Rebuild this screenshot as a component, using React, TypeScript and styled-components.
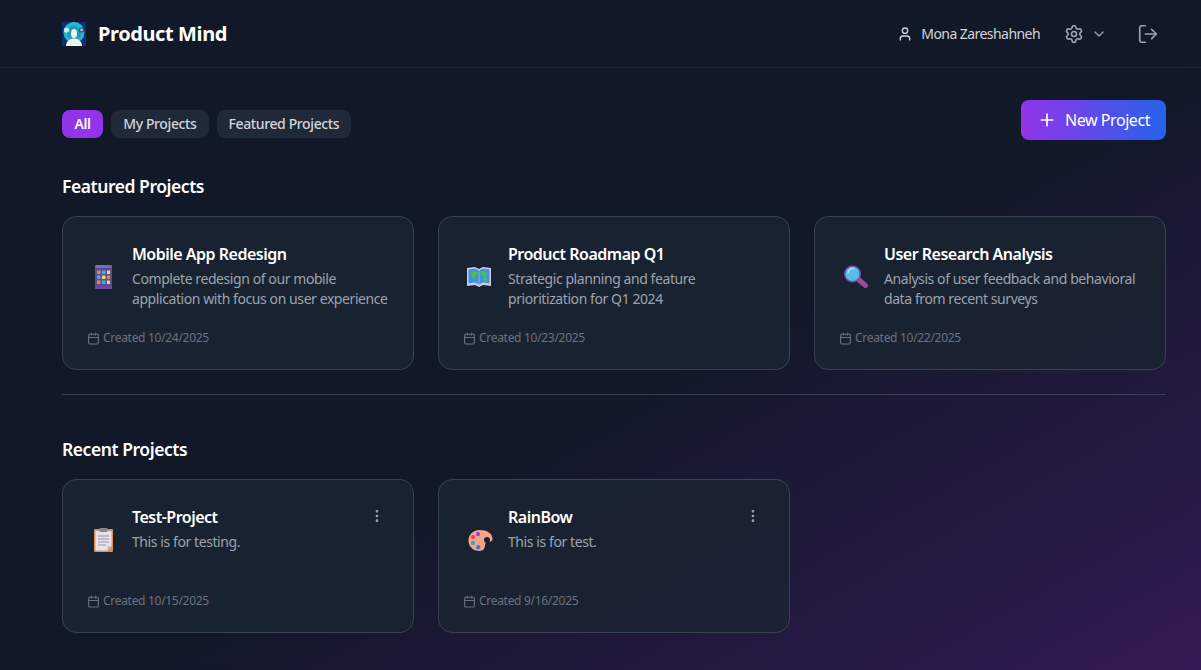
import { ReactNode } from 'react';
import styled, { createGlobalStyle } from 'styled-components';
import { Calendar, ChevronDown, EllipsisVertical, LogOut, Plus, Settings, User } from 'lucide-react';

const GlobalStyle = createGlobalStyle`
  html, body { margin: 0; padding: 0; height: 100%; }
  body { background: #111827; font-family: "Noto Sans", "Liberation Sans", sans-serif; }
`;

const Logo = () => (
  <svg width="24" height="24" viewBox="0 0 24 24">
    <rect width="24" height="24" fill="#0b2f78" />
    <circle cx="12" cy="10.5" r="10.5" fill="#27b6c9" />
    <circle cx="12" cy="11" r="7" fill="#1f9cb4" />
    <circle cx="4.5" cy="8" r="2.600" fill="#cfe8ee" />
    <circle cx="19.5" cy="8" r="2.600" fill="#2d5b94" />
    <circle cx="19.5" cy="8" r="1.300" fill="#a8c4dc" />
    <ellipse cx="12" cy="11.5" rx="3" ry="4.500" fill="#eef7ee" />
    <path d="M4 24c0-5 4-7.5 8-7.5s8 2.500 8 7.500z" fill="#eef7ee" />
  </svg>
);

const PhoneEmoji = () => (
  <svg width="24" height="24" viewBox="0 0 24 24">
    <rect x="4" y="0" width="17" height="24" rx="1.500" fill="#5c4a94" />
    <rect x="4" y="0" width="17" height="3" rx="1.500" fill="#7a68b8" />
    <rect x="4" y="21" width="17" height="3" rx="1" fill="#6a4a9c" />
    <rect x="6" y="5.500" width="3.500" height="3.500" fill="#f5803c" />
    <rect x="11" y="5.500" width="3.500" height="3.500" fill="#2bb0f0" />
    <rect x="16" y="5.500" width="3" height="3.500" fill="#fbd84a" />
    <rect x="6" y="10.500" width="3.500" height="3.500" fill="#2bb0f0" />
    <rect x="11" y="10.500" width="3.500" height="3.500" fill="#fbd84a" />
    <rect x="16" y="10.500" width="3" height="3.500" fill="#f5803c" />
    <rect x="6" y="15.500" width="3.500" height="3.500" fill="#f5803c" />
    <rect x="11" y="15.500" width="3.500" height="3.500" fill="#2bb0f0" />
    <rect x="16" y="15.500" width="3" height="3.500" fill="#fbd84a" />
  </svg>
);

const MapEmoji = () => (
  <svg width="26" height="24" viewBox="1 0 26 24">
    <path d="M1 3l8-1 4 2 4-2 8 1v18l-8-1-4 2-4-2-8 1z" fill="#d8c8e8" />
    <path d="M2.500 4.500l6.500-1 4 2 4-2 6.500 1v14l-6.500-1-4 2-4-2-6.500 1z" fill="#3a96e0" />
    <path d="M5 7l5-1 2 3-3 2-1 4-2-3zM14 7l6-1 1 4-3 1-2-1zM17 13l3-1 1 4-3 1z" fill="#4cc04c" />
    <path d="M13 5v17" stroke="#b4a8cc" strokeWidth="0.800" />
  </svg>
);

const SearchEmoji = () => (
  <svg width="26" height="26" viewBox="0 0 26 26">
    <path d="M15.500 15.500l7 6" stroke="#9c4a94" strokeWidth="5" strokeLinecap="round" />
    <circle cx="9.500" cy="10" r="8.500" fill="#7a4fa8" />
    <circle cx="9.500" cy="10" r="7" fill="#52c0ea" />
    <path d="M5 9a5 5 0 0 1 6-4.500" stroke="#9fe2f6" strokeWidth="1.600" fill="none" strokeLinecap="round" />
  </svg>
);

const ClipboardEmoji = () => (
  <svg width="24" height="26" viewBox="0 0 24 26">
    <rect x="3" y="2" width="19" height="23" rx="1" fill="#d8925a" />
    <path d="M4.500 4h16v15.500l-4 4h-12z" fill="#e8e2ee" />
    <path d="M16.500 23.500l4-4h-4z" fill="#b8aec8" />
    <rect x="8.500" y="1" width="8" height="4" rx="1" fill="#8c8498" />
    <path d="M7 9h11M7 12h11M7 15h11M7 18h8" stroke="#9a92a8" strokeWidth="1" />
  </svg>
);

const PaletteEmoji = () => (
  <svg width="26" height="24" viewBox="-1.500 0 26 24">
    <path d="M11 2c7 0 13 3 13 9 0 3-4 2.500-6 3.500-2 1-1 3-2 5.500-1 3-5 3.500-8.500 2.500C3 21.500 0 17 0 12.500 0 6.500 5 2 11 2z" fill="#f6a58c" />
    <circle cx="18.500" cy="12" r="3" fill="#1b2331" />
    <rect x="7.500" y="4" width="4" height="4" rx="1.500" fill="#8a4fd0" />
    <rect x="2.500" y="7" width="4" height="4" rx="1.500" fill="#e83e78" />
    <rect x="2.500" y="13" width="4" height="4" rx="1.500" fill="#2ab0a8" />
    <rect x="7.500" y="17" width="4.500" height="4.500" rx="2" fill="#3a80e8" />
  </svg>
);

const Page = styled.div`
  min-height: 670px;
  box-sizing: border-box;
  background: linear-gradient(to bottom right, #111827 0%, #111827 54%, #331a55 100%);
`;

const Header = styled.header`
  height: 67px;
  display: flex;
  align-items: center;
  justify-content: space-between;
  padding: 0 42px 0 62px;
  border-bottom: 1px solid #1f2937;
`;

const Brand = styled.div`
  display: flex;
  align-items: center;
  gap: 12px;
`;

const BrandName = styled.span`
  font-size: 20px;
  font-weight: 700;
  letter-spacing: -0.4px;
  color: #fff;
`;

const HeaderActions = styled.div`
  display: flex;
  align-items: center;
  color: #9ca3af;
`;

const UserName = styled.span`
  display: flex;
  align-items: center;
  gap: 8px;
  font-size: 14px;
  letter-spacing: -0.56px;
  color: #d1d5db;
  margin-right: 24px;
`;

const SettingsButton = styled.span`
  display: flex;
  align-items: center;
  gap: 7px;
  margin-right: 30px;
`;

const Main = styled.main`
  padding: 32px 35px 0 62px;
`;

const Toolbar = styled.div`
  display: flex;
  align-items: flex-start;
  justify-content: space-between;
  height: 73px;
`;

const Filters = styled.div`
  display: flex;
  gap: 8px;
  margin-top: 10px;
`;

const Filter = styled.button<{ $active?: boolean }>`
  height: 28px;
  padding: 0 ${(p) => (p.$active ? 12.5 : 12)}px 2px;
  border: 0;
  border-radius: 8px;
  font: ${(p) => (p.$active ? 600 : 500)} 14px "Noto Sans", sans-serif;
  letter-spacing: -0.38px;
  color: ${(p) => (p.$active ? '#fff' : '#d1d5db')};
  background: ${(p) => (p.$active ? '#9333ea' : '#1f2937')};
`;

const NewButton = styled.button`
  height: 40px;
  width: 145px;
  display: flex;
  align-items: center;
  justify-content: center;
  gap: 8px;
  border: 0;
  border-radius: 8px;
  color: #fff;
  font: 400 16px "Noto Sans", sans-serif;
  letter-spacing: -0.45px;
  background: linear-gradient(90deg, #9333ea, #2563eb);
`;

const SectionTitle = styled.h2`
  margin: 0;
  height: 27px;
  font-size: 17.5px;
  line-height: 27px;
  font-weight: 600;
  letter-spacing: -0.45px;
  color: #fff;
`;

const Grid = styled.div`
  display: grid;
  grid-template-columns: repeat(3, 352px);
  gap: 24px;
  margin-top: 16px;
`;

const CardBox = styled.article`
  position: relative;
  box-sizing: border-box;
  height: 154px;
  padding: 25px 20px 0 25px;
  border: 1px solid #374151;
  border-radius: 14px;
  background: rgba(26, 35, 50, 0.88);
`;

const CardTop = styled.div`
  display: flex;
  align-items: center;
  height: 70px;
`;

const EmojiSlot = styled.div`
  flex: 0 0 44px;
  display: flex;
  align-items: center;
  padding-left: 3px;
  box-sizing: border-box;
`;

const CardText = styled.div`
  flex: 1;
  align-self: flex-start;
`;

const CardTitle = styled.h3`
  margin: 0 0 3px;
  font-size: 16px;
  line-height: 24px;
  font-weight: 600;
  letter-spacing: -0.5px;
  color: #fff;
`;

const CardDesc = styled.p`
  margin: 0;
  font-size: 14px;
  line-height: 20px;
  letter-spacing: -0.42px;
  color: #9ca3af;
`;

const CardDate = styled.div`
  display: flex;
  align-items: center;
  gap: 3px;
  margin: 18px 0 0 -1px;
  font-size: 12px;
  line-height: 16px;
  letter-spacing: -0.3px;
  color: #6b7280;
`;

const MenuButton = styled.span`
  position: absolute;
  top: 28px;
  right: 28px;
  display: flex;
  color: #9ca3af;
`;

const Divider = styled.hr`
  margin: 24px 0 41px;
  border: 0;
  border-top: 1px solid #374151;
`;

const Card = ({ icon, title, desc, date, menu }: { icon: ReactNode; title: string; desc: string; date: string; menu?: boolean }) => (
  <CardBox>
    <CardTop>
      <EmojiSlot>{icon}</EmojiSlot>
      <CardText>
        <CardTitle>{title}</CardTitle>
        <CardDesc>{desc}</CardDesc>
      </CardText>
    </CardTop>
    <CardDate>
      <Calendar size={13} />
      Created {date}
    </CardDate>
    {menu && (
      <MenuButton>
        <EllipsisVertical size={16} />
      </MenuButton>
    )}
  </CardBox>
);

export default function App() {
  return (
    <Page>
      <GlobalStyle />
      <Header>
        <Brand>
          <Logo />
          <BrandName>Product Mind</BrandName>
        </Brand>
        <HeaderActions>
          <UserName>
            <User size={16} />
            Mona Zareshahneh
          </UserName>
          <SettingsButton>
            <Settings size={20} />
            <ChevronDown size={16} />
          </SettingsButton>
          <LogOut size={22} strokeWidth={1.8} />
        </HeaderActions>
      </Header>
      <Main>
        <Toolbar>
          <Filters>
            <Filter $active>All</Filter>
            <Filter>My Projects</Filter>
            <Filter>Featured Projects</Filter>
          </Filters>
          <NewButton>
            <Plus size={20} />
            New Project
          </NewButton>
        </Toolbar>
        <SectionTitle>Featured Projects</SectionTitle>
        <Grid>
          <Card icon={<PhoneEmoji />} title="Mobile App Redesign" desc="Complete redesign of our mobile application with focus on user experience" date="10/24/2025" />
          <Card icon={<MapEmoji />} title="Product Roadmap Q1" desc="Strategic planning and feature prioritization for Q1 2024" date="10/23/2025" />
          <Card icon={<SearchEmoji />} title="User Research Analysis" desc="Analysis of user feedback and behavioral data from recent surveys" date="10/22/2025" />
        </Grid>
        <Divider />
        <SectionTitle>Recent Projects</SectionTitle>
        <Grid>
          <Card icon={<ClipboardEmoji />} title="Test-Project" desc="This is for testing." date="10/15/2025" menu />
          <Card icon={<PaletteEmoji />} title="RainBow" desc="This is for test." date="9/16/2025" menu />
        </Grid>
      </Main>
    </Page>
  );
}
